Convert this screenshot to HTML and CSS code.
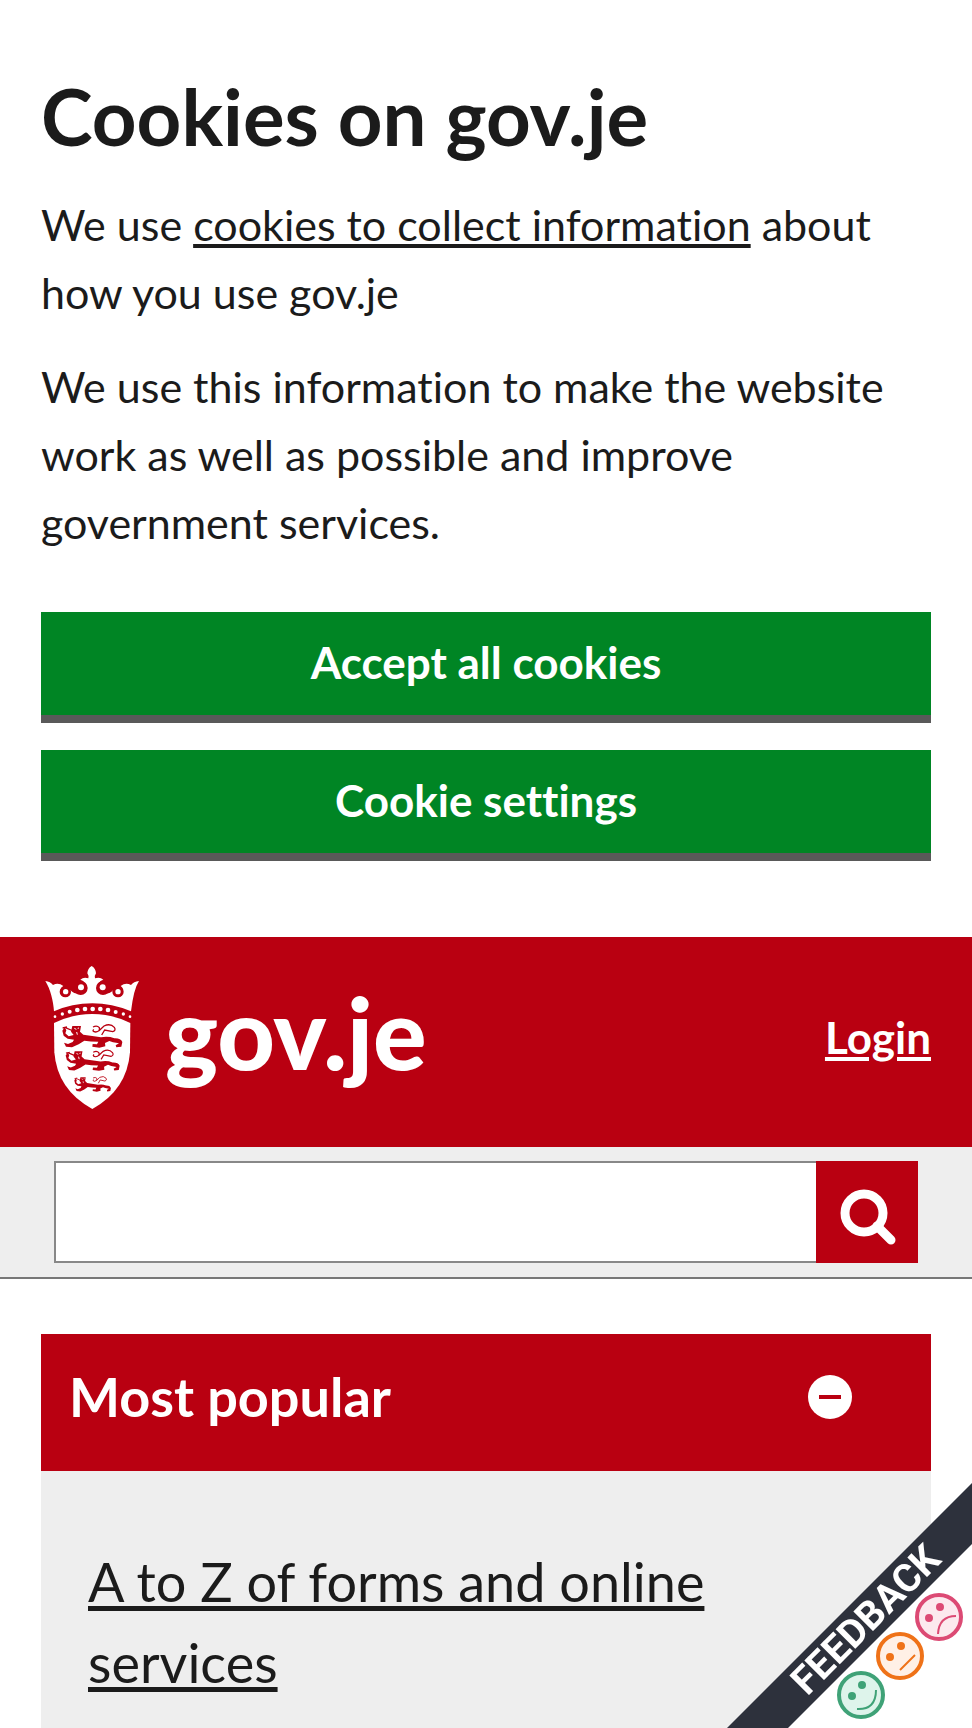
FILE: index.html
```html
<!DOCTYPE html>
<html lang="en">
<head>
  <meta charset="UTF-8">
  <meta name="viewport" content="width=device-width, initial-scale=1">
  <title>gov.je</title>
  <link rel="stylesheet" href="styles.css">
</head>
<body>

  <section class="cookie-banner">
    <h2>Cookies on gov.je</h2>
    <p>We use <a href="#cookies">cookies to collect information</a> about how you use gov.je</p>
    <p>We use this information to make the website work as well as possible and improve government services.</p>
    <div class="cookie-buttons">
      <button type="button" class="btn">Accept all cookies</button>
      <button type="button" class="btn">Cookie settings</button>
    </div>
  </section>

  <header class="site-header">
    <a href="#home" class="logo">
      <svg class="crest" viewBox="44 36 282 429" aria-hidden="true">
        <!-- crown -->
        <path fill="#fff" d="M71 172 C69 140 60 105 45 81 Q60 83 68 93 Q84 84 99 96 Q88 104 93 113 Q101 123 110 115 L120 108 Q133 122 152 119 Q166 114 167 100 Q166 82 150 77 Q160 68 174 73 Q177 67 171 58 Q172 43 184 36 Q196 43 197 58 Q191 67 194 73 Q209 68 219 77 Q203 82 202 100 Q203 114 217 119 Q236 122 249 108 L259 115 Q268 123 276 113 Q281 104 271 96 Q286 84 302 93 Q310 83 326 81 Q310 105 302 172 Q245 148 186 148 Q125 148 71 172Z"/>
        <g fill="#b90011">
          <circle cx="105" cy="113" r="17"/>
          <circle cx="151" cy="102" r="21"/>
          <circle cx="218" cy="102" r="21"/>
          <circle cx="263" cy="113" r="17"/>
        </g>
        <g fill="#fff">
          <circle cx="106" cy="113" r="8"/>
          <circle cx="152" cy="100" r="9"/>
          <circle cx="217" cy="100" r="9"/>
          <circle cx="263" cy="113" r="8"/>
          <circle cx="74" cy="188" r="4"/>
          <circle cx="96" cy="180" r="5"/>
          <circle cx="118" cy="173" r="6"/>
          <circle cx="141" cy="168" r="7"/>
          <circle cx="164" cy="165" r="7"/>
          <circle cx="187" cy="165" r="7"/>
          <circle cx="210" cy="165" r="7"/>
          <circle cx="233" cy="168" r="7"/>
          <circle cx="256" cy="174" r="6"/>
          <circle cx="279" cy="180" r="5"/>
          <circle cx="299" cy="188" r="4"/>
        </g>
        <!-- shield -->
        <path fill="#fff" d="M71 207 Q126 180 186 180 Q246 180 300 207 L299 295 Q290 408 186 465 Q81 408 72 295Z"/>
        <!-- three lions -->
        <defs>
          <g id="lion">
            <path fill="#b90011" d="M30 0 L56 0 L53 17 L63 26 L116 34 Q138 30 156 37 Q175 36 180 48 L177 62 L162 64 L160 58 L170 52 L152 49 L141 45 L128 51 L129 61 L111 65 L90 62 L91 54 L104 55 L108 47 Q84 47 66 44 L49 55 L29 64 L11 62 L5 50 L17 54 L31 48 L35 41 L16 38 L4 29 L0 14 L7 4 L12 13 L9 22 L19 31 L34 27 L26 17Z"/>
            <path fill="none" stroke="#b90011" stroke-width="4" d="M1 6 L14 3 M9 5 L33 15 M92 3 Q104 -3 111 5 Q114 16 100 18 Q88 17 94 10 M110 14 L125 0 Q144 -9 156 4 Q162 13 151 17 L127 12 L118 27"/>
            <path stroke="#fff" stroke-width="3" d="M36 7 L42 10 M46 7 L50 6 M43 18 L45 26"/>
          </g>
        </defs>
        <use href="#lion" transform="translate(96 216)"/>
        <use href="#lion" transform="translate(106 292) scale(.9)"/>
        <use href="#lion" transform="translate(132 370) scale(.61 .66)"/>
      </svg>
      <span class="logo-text">gov.je</span>
    </a>
    <a href="#login" class="login">Login</a>
  </header>

  <form class="search" role="search">
    <input type="search" name="q" aria-label="Search">
    <button type="submit" aria-label="Search">
      <svg viewBox="0 0 58 58" aria-hidden="true">
        <path fill="none" stroke="#fff" stroke-width="9" stroke-linecap="round" d="M38 38 L52 52"/>
        <circle cx="25" cy="25" r="19" fill="none" stroke="#fff" stroke-width="9"/>
      </svg>
    </button>
  </form>

  <main>
    <section class="panel">
      <h2>
        <button type="button" class="panel-toggle" aria-expanded="true">
          <span>Most popular</span>
          <svg viewBox="0 0 44 44" aria-hidden="true">
            <circle cx="22" cy="22" r="22" fill="#fff"/>
            <path fill="#b90011" d="M11 20h22v4H11z"/>
          </svg>
        </button>
      </h2>
      <ul class="panel-links">
        <li><a href="#forms">A to Z of forms and online services</a></li>
      </ul>
    </section>
  </main>

  <a href="#feedback" class="feedback" aria-label="Feedback">
    <svg viewBox="0 0 250 250" aria-hidden="true">
      <path fill="#fff" d="M250 60 V250 H60Z"/>
      <path fill="#2d313c" d="M250 5 V66 L66 250 H5Z"/>
      <text class="feedback-text" x="0" y="0" text-anchor="middle" transform="translate(153 151) rotate(-45)">FEEDBACK</text>
      <g fill="#fce9ee" stroke="#dc4a74" stroke-width="4">
        <circle cx="217" cy="139" r="22"/>
        <path fill="none" stroke-width="2" d="M216 156 Q217 138 234 138"/>
        <circle cx="207" cy="140" r="2"/>
        <circle cx="218" cy="129" r="2"/>
      </g>
      <g fill="#fff0e6" stroke="#ef7218" stroke-width="4">
        <circle cx="178" cy="178" r="22"/>
        <path fill="none" stroke-width="2" d="M178 192 L193 177"/>
        <circle cx="168" cy="179" r="2"/>
        <circle cx="179" cy="168" r="2"/>
      </g>
      <g fill="#def4eb" stroke="#3fa277" stroke-width="4">
        <circle cx="139" cy="217" r="22"/>
        <path fill="none" stroke-width="2" d="M135 231 Q154 232 154 212"/>
        <circle cx="130" cy="218" r="2"/>
        <circle cx="140" cy="207" r="2"/>
      </g>
    </svg>
  </a>

</body>
</html>
```
FILE: styles.css
```css
* {
  box-sizing: border-box;
}

body {
  margin: 0;
  font-family: Lato, "Open Sans", sans-serif;
  font-size: 43px;
  font-variant-ligatures: none;
  line-height: 68px;
  color: #1b1b1b;
  background: #fff;
  overflow-x: hidden;
}

a {
  color: inherit;
}

h2,
p {
  margin: 0;
}

button {
  font-family: inherit;
  font-variant-ligatures: inherit;
  border: 0;
  border-radius: 0;
  cursor: pointer;
}

.cookie-banner {
  padding: 74px 41px 76px;
}

.cookie-banner h2 {
  margin-bottom: 33px;
  font-size: 78px;
  line-height: 84px;
}

.cookie-banner p {
  margin-bottom: 26px;
}

.cookie-buttons {
  display: flex;
  flex-direction: column;
  gap: 27px;
  padding-top: 29px;
}

.btn {
  height: 111px;
  padding: 0 24px 4px;
  background: #008524;
  border-bottom: 8px solid #595959;
  color: #fff;
  font-size: 44px;
  font-weight: bold;
}

.site-header {
  display: flex;
  justify-content: space-between;
  align-items: center;
  height: 210px;
  padding: 0 41px 10px;
  background: #b90011;
  color: #fff;
}

.logo {
  display: flex;
  align-items: center;
  gap: 26px;
  padding-left: 4px;
  text-decoration: none;
}

.crest {
  width: 94px;
  height: 143px;
}

.logo-text {
  padding-bottom: 12px;
  font-size: 100px;
  font-weight: 900;
  line-height: 120px;
}

.login {
  font-size: 44px;
  font-weight: bold;
}

.search {
  display: flex;
  padding: 14px 54px;
  background: #eee;
  border-bottom: 2px solid #777;
}

.search input {
  flex: 1;
  min-width: 0;
  height: 102px;
  padding: 0 24px;
  border: 2px solid #888;
  border-right: 0;
  border-radius: 0;
  background: #fff;
  font: inherit;
  appearance: none;
}

.search button {
  display: flex;
  align-items: center;
  justify-content: center;
  width: 102px;
  height: 102px;
  padding: 10px 0 0 2px;
  background: #b90011;
}

.search svg {
  width: 58px;
  height: 58px;
}

main {
  padding: 55px 41px 0;
}

.panel {
  background: #eee;
}

.panel-toggle {
  display: flex;
  justify-content: space-between;
  align-items: center;
  width: 100%;
  height: 137px;
  padding: 0 79px 12px 28px;
  background: #b90011;
  color: #fff;
  font-size: 54px;
  font-weight: bold;
}

.panel-toggle svg {
  width: 44px;
  height: 44px;
}

.panel-links {
  margin: 0;
  padding: 70px 200px 40px 47px;
  list-style: none;
  font-size: 54px;
  line-height: 81px;
}

.panel-links a {
  text-decoration-thickness: 5px;
  text-underline-offset: 4px;
}

.feedback {
  position: fixed;
  right: 0;
  bottom: 0;
  width: 250px;
  height: 250px;
}

.feedback svg {
  display: block;
  width: 100%;
  height: 100%;
}

.feedback-text {
  fill: #fff;
  font-family: Roboto, sans-serif;
  font-size: 39px;
  font-weight: bold;
}
```
